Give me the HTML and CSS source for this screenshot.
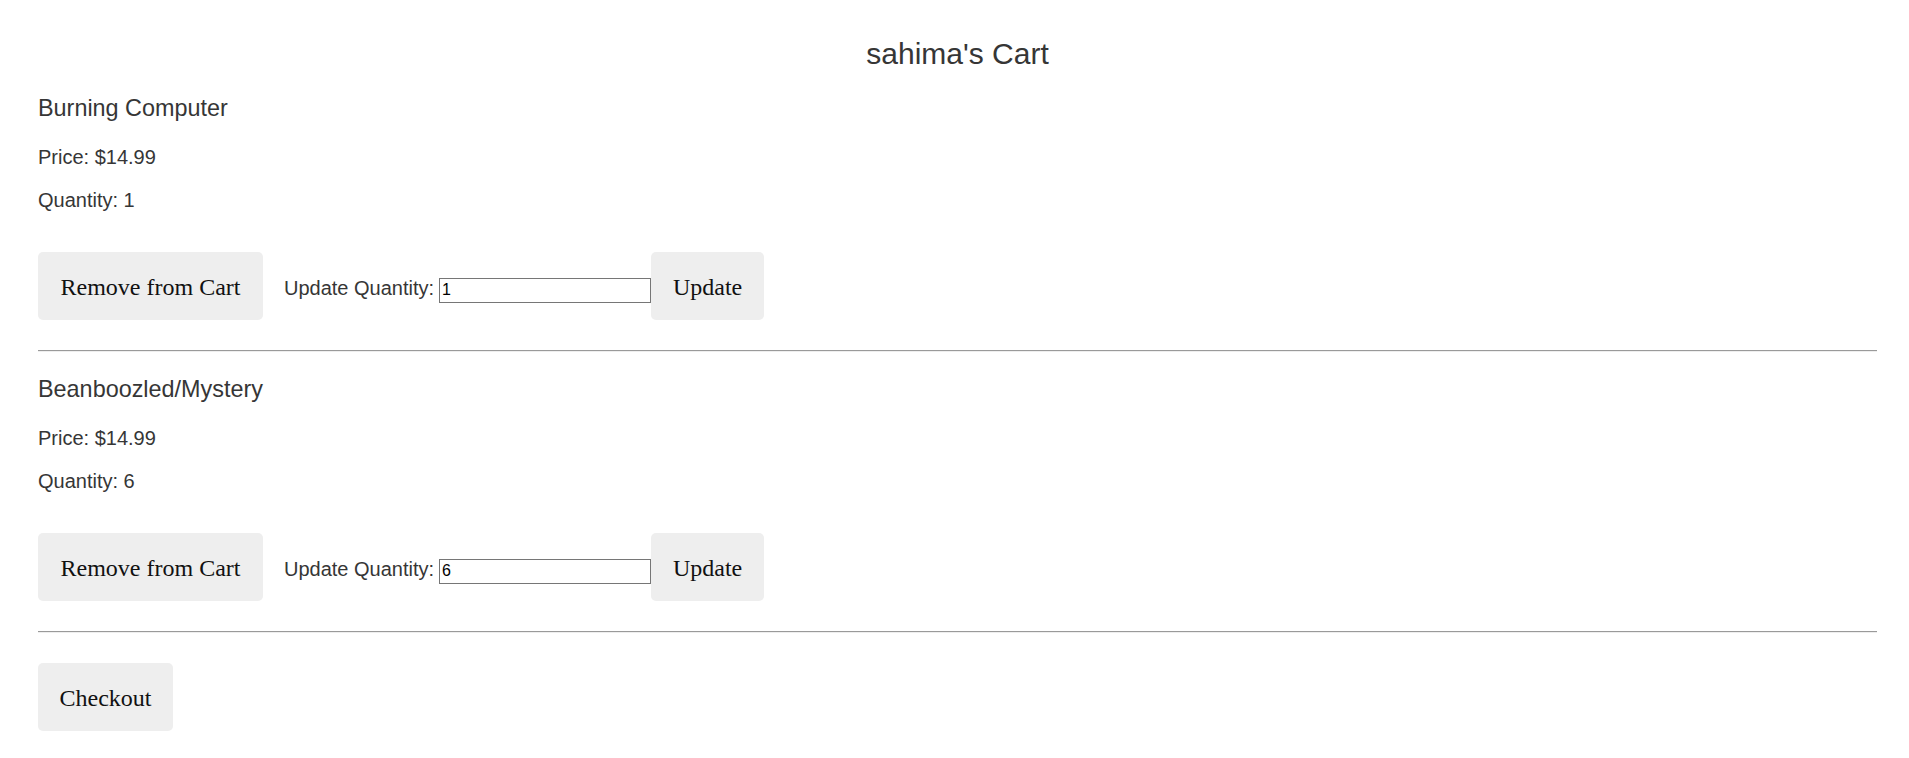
FILE: index.html
```html
<!DOCTYPE html>
<html lang="en">
<head>
<meta charset="utf-8">
<title>sahima's Cart</title>
<link rel="stylesheet" href="styles.css">
</head>
<body>
<main class="cart">
  <h2 class="cart-title">sahima's Cart</h2>

  <section class="item">
    <h3 class="item-name">Burning Computer</h3>
    <p class="item-line item-price">Price: $14.99</p>
    <p class="item-line item-qty">Quantity: 1</p>
    <div class="item-actions">
      <button class="btn btn-remove">Remove from Cart</button>
      <label class="qty-label">Update Quantity:</label>
      <input class="qty-input" type="text" value="1">
      <button class="btn btn-update">Update</button>
    </div>
    <hr class="divider">
  </section>

  <section class="item">
    <h3 class="item-name">Beanboozled/Mystery</h3>
    <p class="item-line item-price">Price: $14.99</p>
    <p class="item-line item-qty">Quantity: 6</p>
    <div class="item-actions">
      <button class="btn btn-remove">Remove from Cart</button>
      <label class="qty-label">Update Quantity:</label>
      <input class="qty-input" type="text" value="6">
      <button class="btn btn-update">Update</button>
    </div>
    <hr class="divider">
  </section>

  <div class="checkout-row">
    <button class="btn btn-checkout">Checkout</button>
  </div>
</main>
</body>
</html>
```

FILE: styles.css
```css
html, body {
  margin: 0;
  padding: 0;
  background: #ffffff;
}

body {
  font-family: "Liberation Sans", Arial, sans-serif;
  font-size: 20px;
  color: #363636;
}

.cart {
  display: flex;
  flex-direction: column;
  padding: 0 32px 40px 38px;
}

.cart-title {
  margin: 37px 0 0;
  font-size: 30px;
  line-height: 34px;
  font-weight: normal;
  text-align: center;
}

.item {
  display: flex;
  flex-direction: column;
}

.item-name {
  margin: 24px 0 0;
  font-size: 23.4px;
  line-height: 27px;
  font-weight: normal;
}

.item-line {
  margin: 20px 0 0;
  font-size: 20px;
  line-height: 23px;
}

.item-price {
  margin-top: 23.5px;
}

.item-actions {
  display: flex;
  align-items: baseline;
  margin-top: 40.5px;
}

.btn {
  font-family: "Liberation Serif", "Times New Roman", serif;
  font-size: 24px;
  line-height: 28px;
  color: #111111;
  background: #eeeeee;
  border: none;
  border-radius: 5px;
  padding: 21px 0 19px;
  text-align: center;
  cursor: pointer;
}

.btn-remove {
  width: 225px;
}

.btn-update {
  width: 113px;
}

.btn-checkout {
  width: 135px;
}

.qty-label {
  margin-left: 21px;
  font-size: 20px;
  line-height: 23px;
}

.qty-input {
  box-sizing: border-box;
  width: 212px;
  height: 25px;
  margin-left: 5px;
  padding: 1px 2px;
  font-family: "Liberation Sans", Arial, sans-serif;
  font-size: 16px;
  color: #000000;
  border: 1px solid #767676;
  border-radius: 0;
  background: #ffffff;
}

.divider {
  margin: 30px 0 0;
  height: 0;
  border: none;
  border-top: 1px solid #9a9a9a;
  border-bottom: 1px solid #eeeeee;
}

.checkout-row {
  display: flex;
  margin-top: 30px;
}
```
